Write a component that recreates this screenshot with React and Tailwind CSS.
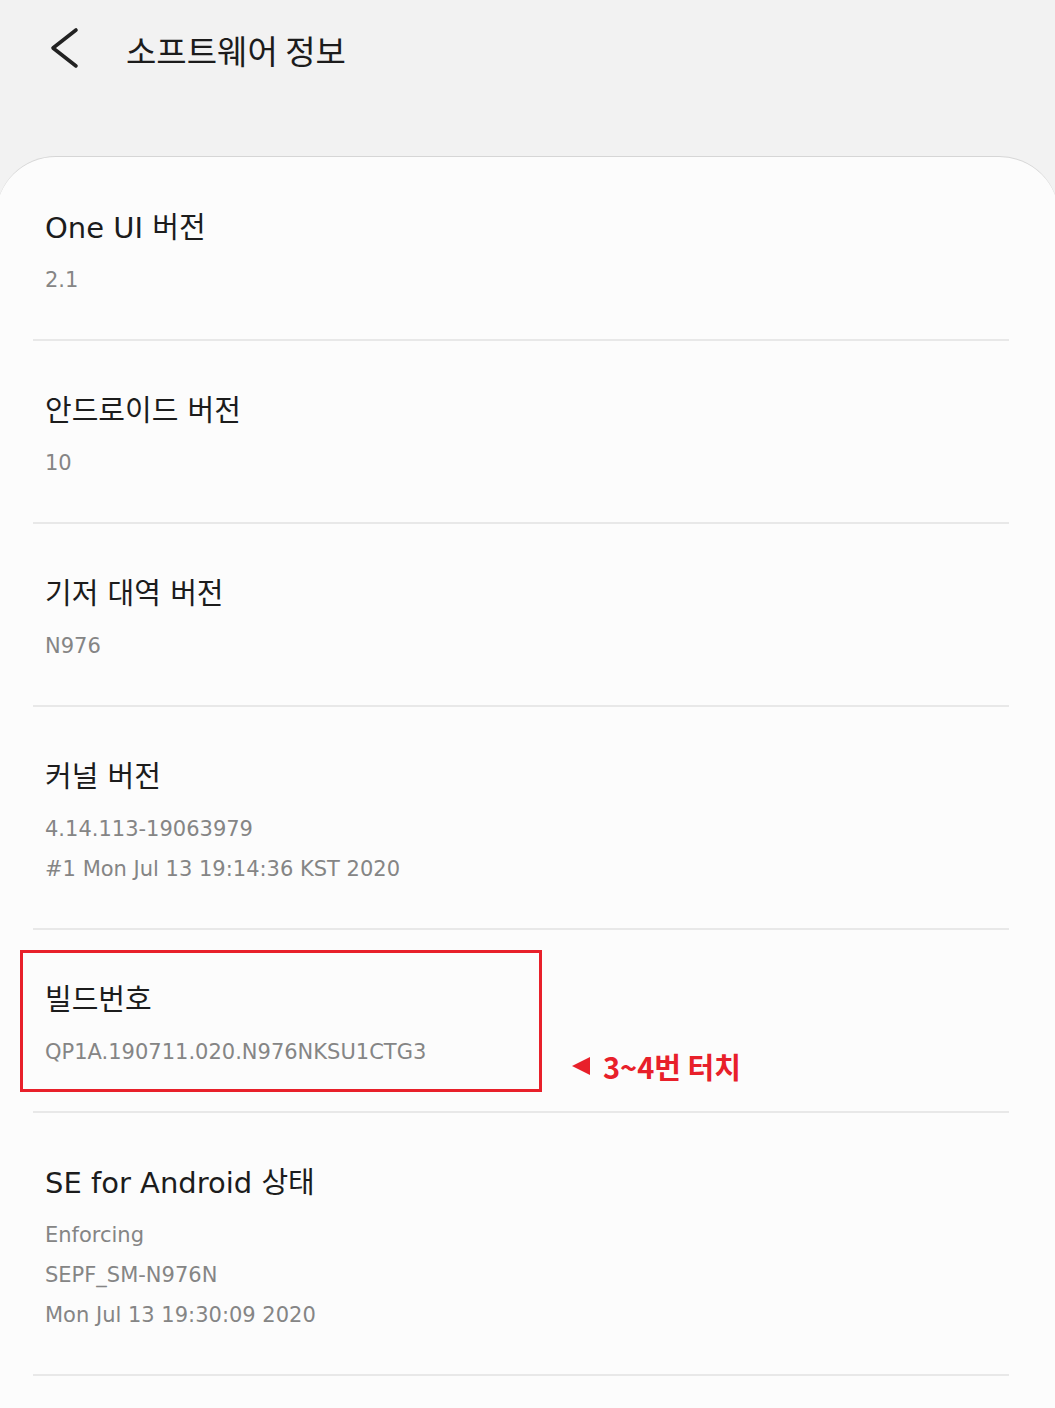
const items = [
  { title: 'One UI 버전', lines: ['2.1'] },
  { title: '안드로이드 버전', lines: ['10'] },
  { title: '기저 대역 버전', lines: ['N976'] },
  { title: '커널 버전', lines: ['4.14.113-19063979', '#1 Mon Jul 13 19:14:36 KST 2020'] },
  { title: '빌드번호', lines: ['QP1A.190711.020.N976NKSU1CTG3'], marked: true },
  { title: 'SE for Android 상태', lines: ['Enforcing', 'SEPF_SM-N976N', 'Mon Jul 13 19:30:09 2020'] },
]

const font = { fontFamily: '"DejaVu Sans", "Noto Sans CJK KR", sans-serif' }
const kr = { fontFamily: '"Noto Sans CJK KR", "Noto Sans", sans-serif' }

function Item({ item, first }) {
  return (
    <div className="relative">
      {!first && <div className="ml-[33px] mr-[46px] h-[2px] bg-[#e8e8e8]" />}
      <div className={`${first ? 'pt-[51px]' : 'pt-[50px]'} pb-[39px] pl-[45px]`}>
        <div className="text-[29px] leading-[40px] text-[#1c1c1c]">{item.title}</div>
        <div className="mt-[12px]">
          {item.lines.map(l => (
            <div key={l} className="text-[21px] leading-[40px] text-[#858585]">{l}</div>
          ))}
        </div>
      </div>
      {item.marked && (
        <>
          <div className="absolute left-[20px] top-[22px] w-[522px] h-[142px] border-[3px] border-[#e8202a]" />
          <div className="absolute left-[572px] top-[122px] flex items-center gap-[13px]" style={kr}>
            <svg width="18" height="18" viewBox="0 0 18 18"><path d="M0 9 L18 0 L18 18 Z" fill="#e8202a" /></svg>
            <span className="text-[29px] leading-[32px] font-bold text-[#e8202a]">3~4번 터치</span>
          </div>
        </>
      )}
    </div>
  )
}

export default function App() {
  return (
    <div className="w-[1055px] h-[1408px] bg-[#f2f2f2] overflow-hidden" style={font}>
      <div className="h-[156px] flex items-start pt-[26px] pl-[48px]">
        <svg width="32" height="44" viewBox="0 0 32 44" fill="none">
          <path d="M28 4 L5 22 L28 40" stroke="#222" strokeWidth="3.6" strokeLinecap="round" strokeLinejoin="round" />
        </svg>
        <span className="ml-[46px] text-[33px] leading-[48px] text-[#1c1c1c]" style={kr}>소프트웨어 정보</span>
      </div>
      <div className="bg-[#fcfcfc] border-t border-[#d6d6d6] rounded-t-[60px] -mx-[4px] px-[4px] h-[1260px]">
        {items.map((item, i) => (
          <Item key={item.title} item={item} first={i === 0} />
        ))}
        <div className="ml-[33px] mr-[46px] h-[2px] bg-[#e8e8e8]" />
      </div>
    </div>
  )
}
